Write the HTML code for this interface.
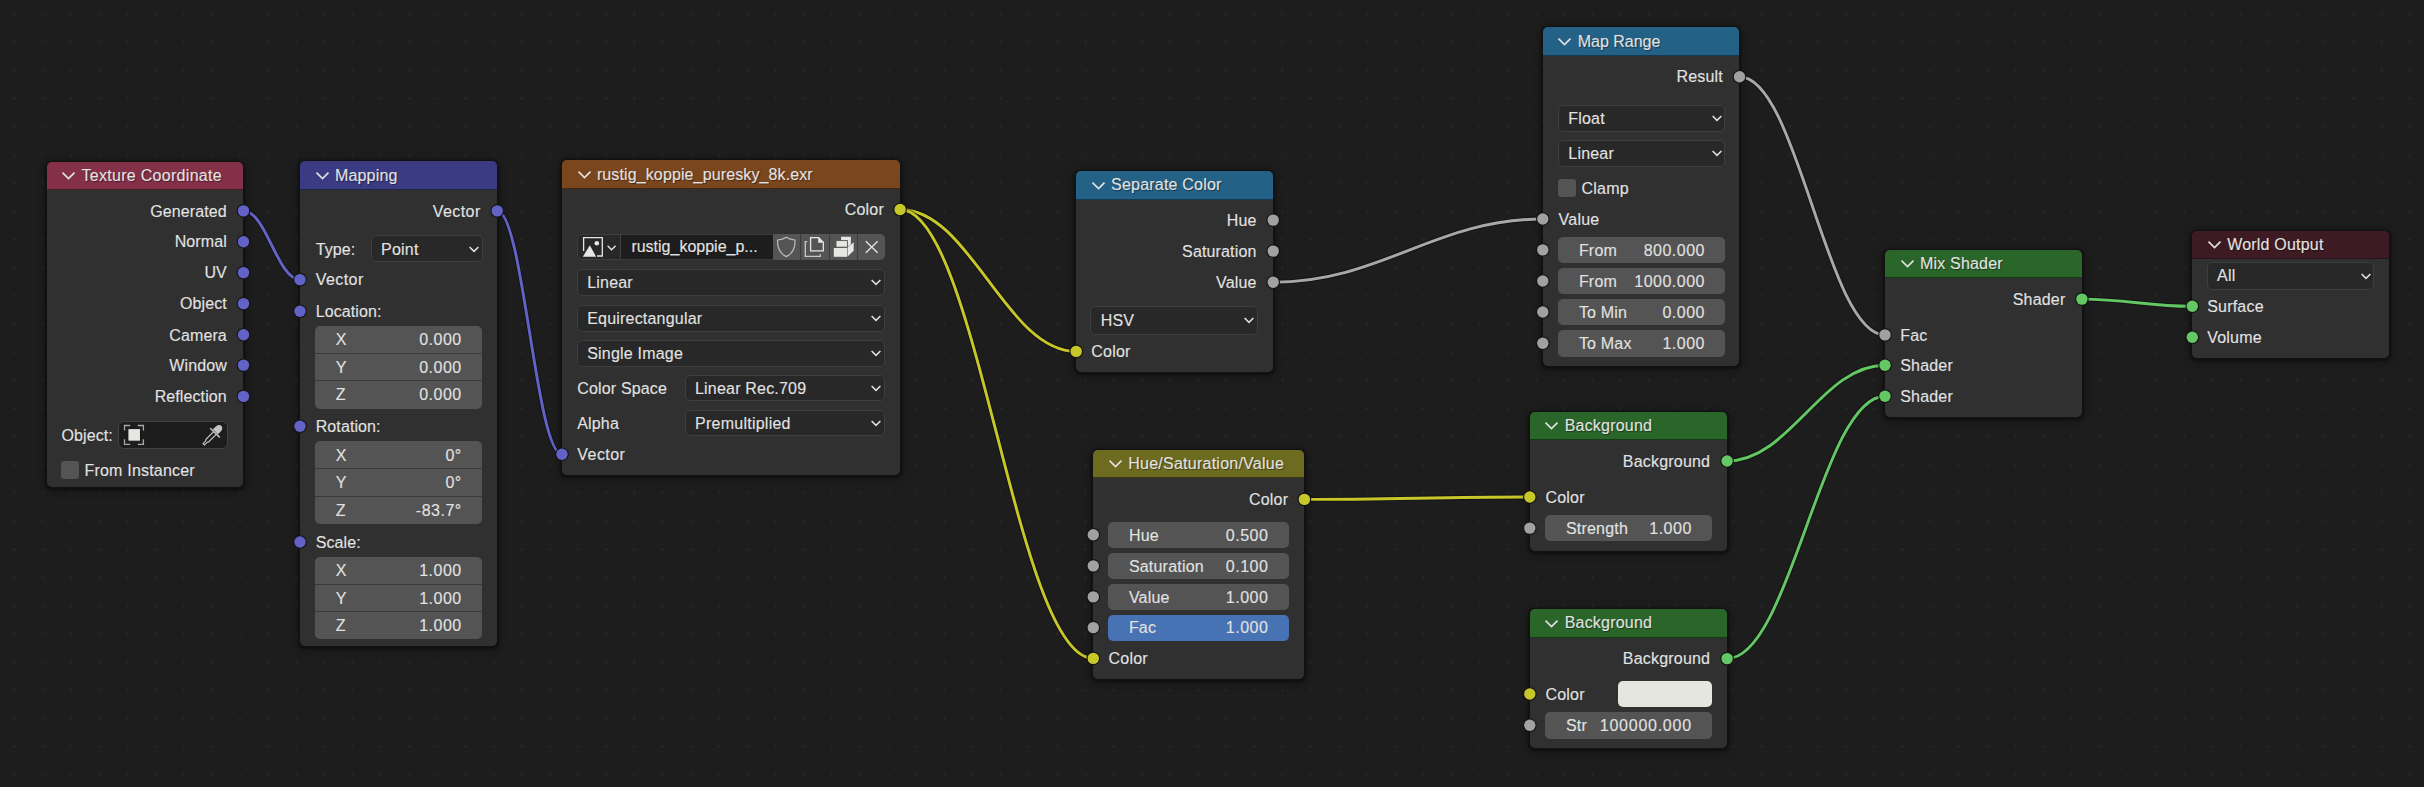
<!DOCTYPE html>
<html><head><meta charset="utf-8"><style>
html,body{margin:0;padding:0;}
body{width:2424px;height:787px;overflow:hidden;position:relative;background:#1d1d1d;
font-family:"Liberation Sans",sans-serif;}
.node{position:absolute;background:#303030;border-radius:5px;box-shadow:0 0 0 1px #121212,0 1px 2px 2px rgba(0,0,0,.32),0 2px 8px 3px rgba(0,0,0,.28);}
.hdr{position:absolute;border-radius:5px 5px 0 0;box-sizing:border-box;}
.t{position:absolute;font-size:16px;line-height:20px;white-space:nowrap;-webkit-text-stroke:0.12px currentColor;}
.ic{position:absolute;overflow:visible;}
.dd{position:absolute;background:#282828;border:1px solid #3e3e3e;border-radius:5px;box-sizing:border-box;}
.idfield{position:absolute;background:#1d1d1d;border:1px solid #434343;border-radius:6px;box-sizing:border-box;}
.nf{position:absolute;}
.sep{position:absolute;height:1px;background:#3a3a3a;}
.cb{position:absolute;width:18.6px;height:18.8px;background:#545454;border-radius:3px;}
svg.layer{position:absolute;left:0;top:0;}
</style></head><body>
<svg class="layer" width="2424" height="787"><defs><pattern id="g" patternUnits="userSpaceOnUse" x="0.51" y="-0.09" width="28.178" height="28.178"><rect x="13.1" y="13.1" width="2" height="2" rx="0.6" fill="#2a2a2a"/></pattern></defs><rect width="2424" height="787" fill="url(#g)"/></svg>
<svg class="layer" width="2424" height="787"><path d="M243.5,210.9 C266.1,210.9 277.4,279.6 300.0,279.6" stroke="rgba(10,10,10,.5)" stroke-width="4.8" fill="none"/><path d="M243.5,210.9 C266.1,210.9 277.4,279.6 300.0,279.6" stroke="#6363c7" stroke-width="2.9" fill="none"/><path d="M497.2,210.9 C523.1,210.9 536.1,454.3 562.0,454.3" stroke="rgba(10,10,10,.5)" stroke-width="4.8" fill="none"/><path d="M497.2,210.9 C523.1,210.9 536.1,454.3 562.0,454.3" stroke="#6363c7" stroke-width="2.9" fill="none"/><path d="M900.1,209.5 C970.5,209.5 1005.8,351.4 1076.2,351.4" stroke="rgba(10,10,10,.5)" stroke-width="4.8" fill="none"/><path d="M900.1,209.5 C970.5,209.5 1005.8,351.4 1076.2,351.4" stroke="#c7c729" stroke-width="2.9" fill="none"/><path d="M900.1,209.5 C977.4,209.5 1016.0,658.4 1093.3,658.4" stroke="rgba(10,10,10,.5)" stroke-width="4.8" fill="none"/><path d="M900.1,209.5 C977.4,209.5 1016.0,658.4 1093.3,658.4" stroke="#c7c729" stroke-width="2.9" fill="none"/><path d="M1273.2,282.2 C1381.0,282.2 1435.0,219.0 1542.8,219.0" stroke="rgba(10,10,10,.5)" stroke-width="4.8" fill="none"/><path d="M1273.2,282.2 C1381.0,282.2 1435.0,219.0 1542.8,219.0" stroke="#a8a8a8" stroke-width="2.9" fill="none"/><path d="M1739.5,76.7 C1797.7,76.7 1826.8,334.9 1885.0,334.9" stroke="rgba(10,10,10,.5)" stroke-width="4.8" fill="none"/><path d="M1739.5,76.7 C1797.7,76.7 1826.8,334.9 1885.0,334.9" stroke="#a8a8a8" stroke-width="2.9" fill="none"/><path d="M1304.4,499.4 C1394.6,499.4 1439.6,497.0 1529.8,497.0" stroke="rgba(10,10,10,.5)" stroke-width="4.8" fill="none"/><path d="M1304.4,499.4 C1394.6,499.4 1439.6,497.0 1529.8,497.0" stroke="#c7c729" stroke-width="2.9" fill="none"/><path d="M1727.1,461.0 C1790.3,461.0 1821.8,365.2 1885.0,365.2" stroke="rgba(10,10,10,.5)" stroke-width="4.8" fill="none"/><path d="M1727.1,461.0 C1790.3,461.0 1821.8,365.2 1885.0,365.2" stroke="#63c763" stroke-width="2.9" fill="none"/><path d="M1727.1,658.6 C1790.3,658.6 1821.8,396.2 1885.0,396.2" stroke="rgba(10,10,10,.5)" stroke-width="4.8" fill="none"/><path d="M1727.1,658.6 C1790.3,658.6 1821.8,396.2 1885.0,396.2" stroke="#63c763" stroke-width="2.9" fill="none"/><path d="M2081.9,299.1 C2126.1,299.1 2148.1,306.3 2192.3,306.3" stroke="rgba(10,10,10,.5)" stroke-width="4.8" fill="none"/><path d="M2081.9,299.1 C2126.1,299.1 2148.1,306.3 2192.3,306.3" stroke="#63c763" stroke-width="2.9" fill="none"/></svg>
<div class="node" style="left:46.5px;top:161.5px;width:196.7px;height:325.0px"></div>
<div class="hdr" style="left:46.5px;top:161.5px;width:196.7px;height:28.5px;background:#833048;border-bottom:1.5px solid #42202a"></div>
<svg class="ic" style="left:61.1px;top:170.1px" width="16" height="12"><polyline points="1.5,2.6 7.5,8.6 13.5,2.6" fill="none" stroke="#e2e2e2" stroke-width="1.6"/></svg>
<div class="t" style="left:81.4px;top:165.8px;color:#e2e2e2;letter-spacing:0.3px;text-shadow:1px 1px 1px rgba(0,0,0,.45)">Texture Coordinate</div>
<div class="t" style="right:2197.2px;top:201.6px;color:#e2e2e2;letter-spacing:0.1px;">Generated</div>
<div class="t" style="right:2197.2px;top:232.4px;color:#e2e2e2;letter-spacing:0.1px;">Normal</div>
<div class="t" style="right:2197.2px;top:263.3px;color:#e2e2e2;letter-spacing:0.1px;">UV</div>
<div class="t" style="right:2197.2px;top:294.3px;color:#e2e2e2;letter-spacing:0.1px;">Object</div>
<div class="t" style="right:2197.2px;top:325.5px;color:#e2e2e2;letter-spacing:0.1px;">Camera</div>
<div class="t" style="right:2197.2px;top:355.8px;color:#e2e2e2;letter-spacing:0.1px;">Window</div>
<div class="t" style="right:2197.2px;top:387.1px;color:#e2e2e2;letter-spacing:0.1px;">Reflection</div>
<div class="t" style="left:61.5px;top:425.9px;color:#e2e2e2;letter-spacing:0.1px;">Object:</div>
<div class="idfield" style="left:117.7px;top:421.2px;width:110.7px;height:27.5px"></div>
<svg class="ic" style="left:122px;top:423px" width="26" height="24">
<path d="M2.5,7.6 V2.5 H8.2 M15.8,2.5 H21.4 V7.6 M21.4,16.2 V21.3 H15.8 M8.2,21.3 H2.5 V16.2" fill="none" stroke="#a8a8a8" stroke-width="1.3"/>
<rect x="5.9" y="5.6" width="12.6" height="12.6" rx="1" fill="#e6e6e2" stroke="#0f0f0f" stroke-width="1"/>
</svg>
<svg class="ic" style="left:201px;top:423px" width="24" height="24">
<path d="M19.6,2.3 c1.9,1.2 2.3,3.7 0.8,5.4 l-3.4,3.6 l-5.2,-5 l3.6,-3.3 c1.2,-1.1 3,-1.5 4.2,-0.7z" fill="#c4c4c4"/>
<path d="M9.2,5.2 l9.6,9.2" stroke="#c4c4c4" stroke-width="1.5"/>
<path d="M12.6,8.6 l-7.6,7.8 l-0.3,1.4 l-2.6,2.8 l1.4,1.3 l2.7,-2.7 l1.4,-0.3 l7.6,-7.6" fill="none" stroke="#c4c4c4" stroke-width="1.2"/>
</svg>
<div class="cb" style="left:60.7px;top:460.6px"></div>
<div class="t" style="left:84.5px;top:460.7px;color:#e2e2e2;letter-spacing:0.2px;">From Instancer</div>
<div class="node" style="left:300.0px;top:161.2px;width:197.2px;height:485.3px"></div>
<div class="hdr" style="left:300.0px;top:161.2px;width:197.2px;height:28.8px;background:#3b3b84;border-bottom:1.5px solid #23234a"></div>
<svg class="ic" style="left:314.6px;top:169.9px" width="16" height="12"><polyline points="1.5,2.6 7.5,8.6 13.5,2.6" fill="none" stroke="#e2e2e2" stroke-width="1.6"/></svg>
<div class="t" style="left:334.9px;top:165.6px;color:#e2e2e2;letter-spacing:0.2px;text-shadow:1px 1px 1px rgba(0,0,0,.45)">Mapping</div>
<div class="t" style="right:1943.3px;top:201.6px;color:#e2e2e2;letter-spacing:0.45px;">Vector</div>
<div class="t" style="left:315.7px;top:239.8px;color:#e2e2e2;letter-spacing:0.1px;">Type:</div>
<div class="dd" style="left:370.6px;top:235.4px;width:112.0px;height:27.1px"></div>
<div class="t" style="left:381.1px;top:239.6px;color:#e2e2e2;letter-spacing:0.2px;">Point</div>
<svg class="ic" style="left:467.6px;top:243.9px" width="12" height="10"><polyline points="1.6,3 6,7.4 10.4,3" fill="none" stroke="#e2e2e2" stroke-width="1.5"/></svg>
<div class="t" style="left:315.7px;top:270.3px;color:#e2e2e2;letter-spacing:0.45px;">Vector</div>
<div class="t" style="left:315.7px;top:301.9px;color:#e2e2e2;letter-spacing:0.1px;">Location:</div>
<div class="nf" style="left:314.8px;top:325.5px;width:167.4px;height:83.1px;background:#545454;border-radius:5px"></div>
<div class="t" style="left:335.8px;top:330.1px;color:#e2e2e2;letter-spacing:0px;">X</div>
<div class="t" style="right:1962.3px;top:330.1px;color:#e2e2e2;letter-spacing:0.5px;">0.000</div>
<div class="sep" style="left:314.8px;top:352.7px;width:167.4px"></div>
<div class="t" style="left:335.8px;top:357.8px;color:#e2e2e2;letter-spacing:0px;">Y</div>
<div class="t" style="right:1962.3px;top:357.8px;color:#e2e2e2;letter-spacing:0.5px;">0.000</div>
<div class="sep" style="left:314.8px;top:380.4px;width:167.4px"></div>
<div class="t" style="left:335.8px;top:385.4px;color:#e2e2e2;letter-spacing:0px;">Z</div>
<div class="t" style="right:1962.3px;top:385.4px;color:#e2e2e2;letter-spacing:0.5px;">0.000</div>
<div class="t" style="left:315.7px;top:416.9px;color:#e2e2e2;letter-spacing:0.1px;">Rotation:</div>
<div class="nf" style="left:314.8px;top:441.2px;width:167.4px;height:82.8px;background:#545454;border-radius:5px"></div>
<div class="t" style="left:335.8px;top:445.7px;color:#e2e2e2;letter-spacing:0px;">X</div>
<div class="t" style="right:1962.3px;top:445.7px;color:#e2e2e2;letter-spacing:0.5px;">0°</div>
<div class="sep" style="left:314.8px;top:468.3px;width:167.4px"></div>
<div class="t" style="left:335.8px;top:473.3px;color:#e2e2e2;letter-spacing:0px;">Y</div>
<div class="t" style="right:1962.3px;top:473.3px;color:#e2e2e2;letter-spacing:0.5px;">0°</div>
<div class="sep" style="left:314.8px;top:495.9px;width:167.4px"></div>
<div class="t" style="left:335.8px;top:500.9px;color:#e2e2e2;letter-spacing:0px;">Z</div>
<div class="t" style="right:1962.3px;top:500.9px;color:#e2e2e2;letter-spacing:0.5px;">-83.7°</div>
<div class="t" style="left:315.7px;top:532.7px;color:#e2e2e2;letter-spacing:0.1px;">Scale:</div>
<div class="nf" style="left:314.8px;top:556.6px;width:167.4px;height:82.6px;background:#545454;border-radius:5px"></div>
<div class="t" style="left:335.8px;top:561.1px;color:#e2e2e2;letter-spacing:0px;">X</div>
<div class="t" style="right:1962.3px;top:561.1px;color:#e2e2e2;letter-spacing:0.5px;">1.000</div>
<div class="sep" style="left:314.8px;top:583.6px;width:167.4px"></div>
<div class="t" style="left:335.8px;top:588.6px;color:#e2e2e2;letter-spacing:0px;">Y</div>
<div class="t" style="right:1962.3px;top:588.6px;color:#e2e2e2;letter-spacing:0.5px;">1.000</div>
<div class="sep" style="left:314.8px;top:611.2px;width:167.4px"></div>
<div class="t" style="left:335.8px;top:616.1px;color:#e2e2e2;letter-spacing:0px;">Z</div>
<div class="t" style="right:1962.3px;top:616.1px;color:#e2e2e2;letter-spacing:0.5px;">1.000</div>
<div class="node" style="left:562.0px;top:160.0px;width:338.1px;height:315.0px"></div>
<div class="hdr" style="left:562.0px;top:160.0px;width:338.1px;height:29.0px;background:#7a461e;border-bottom:1.5px solid #40260f"></div>
<svg class="ic" style="left:576.6px;top:168.8px" width="16" height="12"><polyline points="1.5,2.6 7.5,8.6 13.5,2.6" fill="none" stroke="#e2e2e2" stroke-width="1.6"/></svg>
<div class="t" style="left:596.9px;top:164.5px;color:#e2e2e2;letter-spacing:0.12px;text-shadow:1px 1px 1px rgba(0,0,0,.45)">rustig_koppie_puresky_8k.exr</div>
<div class="t" style="right:1540.1px;top:200.2px;color:#e2e2e2;letter-spacing:0.2px;">Color</div>
<div class="dd" style="left:576.7px;top:233.9px;width:52px;height:26.3px;border-top-right-radius:0;border-bottom-right-radius:0"></div>
<div style="position:absolute;left:620.5px;top:233.9px;width:152.2px;height:26.3px;background:#1d1d1d;border-top:1px solid #3a3a3a;border-bottom:1px solid #3a3a3a;box-sizing:border-box"></div>
<div style="position:absolute;left:620px;top:234.4px;width:1px;height:25.3px;background:#3f3f3f"></div>
<div style="position:absolute;left:772.7px;top:233.9px;width:27.4px;height:26.3px;background:#545454;"></div>
<div style="position:absolute;left:801.1px;top:233.9px;width:27.9px;height:26.3px;background:#545454;"></div>
<div style="position:absolute;left:830.0px;top:233.9px;width:27.0px;height:26.3px;background:#545454;"></div>
<div style="position:absolute;left:858.1px;top:233.9px;width:26.7px;height:26.3px;background:#545454;border-top-right-radius:5px;border-bottom-right-radius:5px;"></div>
<div style="position:absolute;left:800.1px;top:233.9px;width:1px;height:26.3px;background:#3a3a3a"></div>
<div style="position:absolute;left:829px;top:233.9px;width:1px;height:26.3px;background:#3a3a3a"></div>
<div style="position:absolute;left:857px;top:233.9px;width:1px;height:26.3px;background:#3a3a3a"></div>
<svg class="ic" style="left:581px;top:235px" width="40" height="24">
<path d="M2.6,16 V2.6 H21.3 V21 H16.1" fill="none" stroke="#e6e6e2" stroke-width="1.3"/>
<path d="M1.9,21.7 L8.8,10.2 L15.1,21.7 Z" fill="#e6e6e2"/>
<circle cx="15.8" cy="8.2" r="2.3" fill="#e6e6e2"/>
<polyline points="26.6,10.8 30.6,14.8 34.6,10.8" fill="none" stroke="#e6e6e2" stroke-width="1.3"/>
</svg>
<div class="t" style="left:631.4px;top:237.1px;color:#e2e2e2;letter-spacing:0.0px;">rustig_koppie_p...</div>
<svg class="ic" style="left:776px;top:236px" width="21" height="22">
<path d="M10.3,1.3 C8,2.9 5.4,3.8 1.6,4 C1.2,12.5 3.6,17.4 10.3,20.6 C17,17.4 19.4,12.5 19,4 C15.2,3.8 12.6,2.9 10.3,1.3 Z" fill="none" stroke="#bdbdbd" stroke-width="1.2"/>
</svg>
<svg class="ic" style="left:803px;top:236px" width="24" height="22">
<path d="M4.3,5.7 H2.3 V20.4 H17.3 V18.3" fill="none" stroke="#c8c8c8" stroke-width="1.3"/>
<path d="M7.6,1.6 H15.6 L20.3,6.3 V14.9 H7.6 Z" fill="none" stroke="#e6e6e2" stroke-width="1.3"/>
<path d="M15.2,1.5 L20.4,6.7 H15.2 Z" fill="#e6e6e2"/>
</svg>
<svg class="ic" style="left:832px;top:236px" width="24" height="22">
<path d="M9.1,0.7 H18.9 V8.2 L16.6,10.5 H9.1 Z" fill="#e6e6e2"/>
<rect x="4" y="4.6" width="11.4" height="6.6" fill="#e6e6e2" stroke="#545454" stroke-width="0.9"/>
<rect x="1.8" y="12" width="13.3" height="8.8" fill="#e6e6e2"/>
<path d="M15.6,11.6 L21.7,6.2 V14.8 L15.6,20.4 Z" fill="#e6e6e2"/>
</svg>
<svg class="ic" style="left:863px;top:239px" width="17" height="16">
<path d="M2.8,2.3 L14.7,13.8 M14.7,2.3 L2.8,13.8" stroke="#e6e6e2" stroke-width="1.3"/>
</svg>
<div class="dd" style="left:576.7px;top:268.5px;width:308.6px;height:27.9px"></div>
<div class="t" style="left:587.2px;top:273.1px;color:#e2e2e2;letter-spacing:0.2px;">Linear</div>
<svg class="ic" style="left:870.3px;top:277.4px" width="12" height="10"><polyline points="1.6,3 6,7.4 10.4,3" fill="none" stroke="#e2e2e2" stroke-width="1.5"/></svg>
<div class="dd" style="left:576.7px;top:304.7px;width:308.6px;height:27.0px"></div>
<div class="t" style="left:587.2px;top:308.9px;color:#e2e2e2;letter-spacing:0.2px;">Equirectangular</div>
<svg class="ic" style="left:870.3px;top:313.2px" width="12" height="10"><polyline points="1.6,3 6,7.4 10.4,3" fill="none" stroke="#e2e2e2" stroke-width="1.5"/></svg>
<div class="dd" style="left:576.7px;top:339.7px;width:308.6px;height:27.0px"></div>
<div class="t" style="left:587.2px;top:343.9px;color:#e2e2e2;letter-spacing:0.2px;">Single Image</div>
<svg class="ic" style="left:870.3px;top:348.2px" width="12" height="10"><polyline points="1.6,3 6,7.4 10.4,3" fill="none" stroke="#e2e2e2" stroke-width="1.5"/></svg>
<div class="t" style="left:577.3px;top:378.7px;color:#e2e2e2;letter-spacing:0.15px;">Color Space</div>
<div class="dd" style="left:684.5px;top:374.7px;width:200.8px;height:26.5px"></div>
<div class="t" style="left:695.0px;top:378.6px;color:#e2e2e2;letter-spacing:0.2px;">Linear Rec.709</div>
<svg class="ic" style="left:870.3px;top:382.9px" width="12" height="10"><polyline points="1.6,3 6,7.4 10.4,3" fill="none" stroke="#e2e2e2" stroke-width="1.5"/></svg>
<div class="t" style="left:577.3px;top:413.8px;color:#e2e2e2;letter-spacing:0.15px;">Alpha</div>
<div class="dd" style="left:684.5px;top:409.7px;width:200.8px;height:26.8px"></div>
<div class="t" style="left:695.0px;top:413.8px;color:#e2e2e2;letter-spacing:0.25px;">Premultiplied</div>
<svg class="ic" style="left:870.3px;top:418.1px" width="12" height="10"><polyline points="1.6,3 6,7.4 10.4,3" fill="none" stroke="#e2e2e2" stroke-width="1.5"/></svg>
<div class="t" style="left:577.3px;top:445.0px;color:#e2e2e2;letter-spacing:0.45px;">Vector</div>
<div class="node" style="left:1076.2px;top:171.2px;width:197.0px;height:200.4px"></div>
<div class="hdr" style="left:1076.2px;top:171.2px;width:197.0px;height:28.5px;background:#246186;border-bottom:1.5px solid #153a50"></div>
<svg class="ic" style="left:1090.8px;top:179.8px" width="16" height="12"><polyline points="1.5,2.6 7.5,8.6 13.5,2.6" fill="none" stroke="#e2e2e2" stroke-width="1.6"/></svg>
<div class="t" style="left:1111.1px;top:175.4px;color:#e2e2e2;letter-spacing:0.2px;text-shadow:1px 1px 1px rgba(0,0,0,.45)">Separate Color</div>
<div class="t" style="right:1167.5px;top:210.8px;color:#e2e2e2;letter-spacing:0.15px;">Hue</div>
<div class="t" style="right:1167.5px;top:241.8px;color:#e2e2e2;letter-spacing:0.15px;">Saturation</div>
<div class="t" style="right:1167.5px;top:272.9px;color:#e2e2e2;letter-spacing:0.15px;">Value</div>
<div class="dd" style="left:1090.2px;top:306.2px;width:168.2px;height:28.5px"></div>
<div class="t" style="left:1100.7px;top:311.1px;color:#e2e2e2;letter-spacing:0.2px;">HSV</div>
<svg class="ic" style="left:1243.4px;top:315.4px" width="12" height="10"><polyline points="1.6,3 6,7.4 10.4,3" fill="none" stroke="#e2e2e2" stroke-width="1.5"/></svg>
<div class="t" style="left:1091.3px;top:342.1px;color:#e2e2e2;letter-spacing:0.2px;">Color</div>
<div class="node" style="left:1093.3px;top:450.2px;width:211.1px;height:228.5px"></div>
<div class="hdr" style="left:1093.3px;top:450.2px;width:211.1px;height:27.8px;background:#6d6b20;border-bottom:1.5px solid #3c3a12"></div>
<svg class="ic" style="left:1107.9px;top:458.4px" width="16" height="12"><polyline points="1.5,2.6 7.5,8.6 13.5,2.6" fill="none" stroke="#e2e2e2" stroke-width="1.6"/></svg>
<div class="t" style="left:1128.2px;top:454.1px;color:#e2e2e2;letter-spacing:0.25px;text-shadow:1px 1px 1px rgba(0,0,0,.45)">Hue/Saturation/Value</div>
<div class="t" style="right:1135.8px;top:490.1px;color:#e2e2e2;letter-spacing:0.2px;">Color</div>
<div class="nf" style="left:1107.9px;top:521.6px;width:181.0px;height:26.4px;background:#545454;border-radius:5px"></div>
<div class="t" style="left:1128.9px;top:525.5px;color:#e2e2e2;letter-spacing:0.2px;">Hue</div>
<div class="t" style="right:1155.6px;top:525.5px;color:#e2e2e2;letter-spacing:0.5px;">0.500</div>
<div class="nf" style="left:1107.9px;top:552.7px;width:181.0px;height:26.3px;background:#545454;border-radius:5px"></div>
<div class="t" style="left:1128.9px;top:556.6px;color:#e2e2e2;letter-spacing:0.2px;">Saturation</div>
<div class="t" style="right:1155.6px;top:556.6px;color:#e2e2e2;letter-spacing:0.5px;">0.100</div>
<div class="nf" style="left:1107.9px;top:583.7px;width:181.0px;height:26.3px;background:#545454;border-radius:5px"></div>
<div class="t" style="left:1128.9px;top:587.6px;color:#e2e2e2;letter-spacing:0.2px;">Value</div>
<div class="t" style="right:1155.6px;top:587.6px;color:#e2e2e2;letter-spacing:0.5px;">1.000</div>
<div class="nf" style="left:1107.9px;top:614.6px;width:181.0px;height:26.2px;background:#4772b3;border-radius:5px"></div>
<div class="t" style="left:1128.9px;top:618.4px;color:#e2e2e2;letter-spacing:0.2px;">Fac</div>
<div class="t" style="right:1155.6px;top:618.4px;color:#e2e2e2;letter-spacing:0.5px;">1.000</div>
<div class="t" style="left:1108.6px;top:649.1px;color:#e2e2e2;letter-spacing:0.2px;">Color</div>
<div class="node" style="left:1542.8px;top:27.2px;width:196.7px;height:339.0px"></div>
<div class="hdr" style="left:1542.8px;top:27.2px;width:196.7px;height:29.0px;background:#246186;border-bottom:1.5px solid #153a50"></div>
<svg class="ic" style="left:1557.4px;top:36.0px" width="16" height="12"><polyline points="1.5,2.6 7.5,8.6 13.5,2.6" fill="none" stroke="#e2e2e2" stroke-width="1.6"/></svg>
<div class="t" style="left:1577.7px;top:31.7px;color:#e2e2e2;letter-spacing:0.0px;text-shadow:1px 1px 1px rgba(0,0,0,.45)">Map Range</div>
<div class="t" style="right:701.0px;top:67.4px;color:#e2e2e2;letter-spacing:0.2px;">Result</div>
<div class="dd" style="left:1557.8px;top:104.5px;width:167.7px;height:27.0px"></div>
<div class="t" style="left:1568.3px;top:108.7px;color:#e2e2e2;letter-spacing:0.2px;">Float</div>
<svg class="ic" style="left:1710.5px;top:113.0px" width="12" height="10"><polyline points="1.6,3 6,7.4 10.4,3" fill="none" stroke="#e2e2e2" stroke-width="1.5"/></svg>
<div class="dd" style="left:1557.8px;top:139.5px;width:167.7px;height:27.0px"></div>
<div class="t" style="left:1568.3px;top:143.7px;color:#e2e2e2;letter-spacing:0.2px;">Linear</div>
<svg class="ic" style="left:1710.5px;top:148.0px" width="12" height="10"><polyline points="1.6,3 6,7.4 10.4,3" fill="none" stroke="#e2e2e2" stroke-width="1.5"/></svg>
<div class="cb" style="left:1557.8px;top:178.6px"></div>
<div class="t" style="left:1581.6px;top:178.7px;color:#e2e2e2;letter-spacing:0.2px;">Clamp</div>
<div class="t" style="left:1558.6px;top:209.7px;color:#e2e2e2;letter-spacing:0.2px;">Value</div>
<div class="nf" style="left:1557.9px;top:236.6px;width:167.6px;height:26.7px;background:#545454;border-radius:5px"></div>
<div class="t" style="left:1578.9px;top:240.6px;color:#e2e2e2;letter-spacing:0.2px;">From</div>
<div class="t" style="right:719.0px;top:240.6px;color:#e2e2e2;letter-spacing:0.5px;">800.000</div>
<div class="nf" style="left:1557.9px;top:267.9px;width:167.6px;height:26.3px;background:#545454;border-radius:5px"></div>
<div class="t" style="left:1578.9px;top:271.7px;color:#e2e2e2;letter-spacing:0.2px;">From</div>
<div class="t" style="right:719.0px;top:271.7px;color:#e2e2e2;letter-spacing:0.5px;">1000.000</div>
<div class="nf" style="left:1557.9px;top:298.7px;width:167.6px;height:26.6px;background:#545454;border-radius:5px"></div>
<div class="t" style="left:1578.9px;top:302.7px;color:#e2e2e2;letter-spacing:0.2px;">To Min</div>
<div class="t" style="right:719.0px;top:302.7px;color:#e2e2e2;letter-spacing:0.5px;">0.000</div>
<div class="nf" style="left:1557.9px;top:329.9px;width:167.6px;height:26.7px;background:#545454;border-radius:5px"></div>
<div class="t" style="left:1578.9px;top:333.9px;color:#e2e2e2;letter-spacing:0.2px;">To Max</div>
<div class="t" style="right:719.0px;top:333.9px;color:#e2e2e2;letter-spacing:0.5px;">1.000</div>
<div class="node" style="left:1529.8px;top:411.8px;width:197.3px;height:139.1px"></div>
<div class="hdr" style="left:1529.8px;top:411.8px;width:197.3px;height:28.5px;background:#2a652a;border-bottom:1.5px solid #173b17"></div>
<svg class="ic" style="left:1544.4px;top:420.4px" width="16" height="12"><polyline points="1.5,2.6 7.5,8.6 13.5,2.6" fill="none" stroke="#e2e2e2" stroke-width="1.6"/></svg>
<div class="t" style="left:1564.7px;top:416.1px;color:#e2e2e2;letter-spacing:0.2px;text-shadow:1px 1px 1px rgba(0,0,0,.45)">Background</div>
<div class="t" style="right:713.8px;top:451.7px;color:#e2e2e2;letter-spacing:0.2px;">Background</div>
<div class="t" style="left:1545.5px;top:487.7px;color:#e2e2e2;letter-spacing:0.2px;">Color</div>
<div class="nf" style="left:1544.9px;top:514.9px;width:167.4px;height:26.4px;background:#545454;border-radius:5px"></div>
<div class="t" style="left:1565.9px;top:518.8px;color:#e2e2e2;letter-spacing:0.2px;">Strength</div>
<div class="t" style="right:732.2px;top:518.8px;color:#e2e2e2;letter-spacing:0.5px;">1.000</div>
<div class="node" style="left:1529.8px;top:609.2px;width:197.3px;height:139.3px"></div>
<div class="hdr" style="left:1529.8px;top:609.2px;width:197.3px;height:28.4px;background:#2a652a;border-bottom:1.5px solid #173b17"></div>
<svg class="ic" style="left:1544.4px;top:617.7px" width="16" height="12"><polyline points="1.5,2.6 7.5,8.6 13.5,2.6" fill="none" stroke="#e2e2e2" stroke-width="1.6"/></svg>
<div class="t" style="left:1564.7px;top:613.4px;color:#e2e2e2;letter-spacing:0.2px;text-shadow:1px 1px 1px rgba(0,0,0,.45)">Background</div>
<div class="t" style="right:713.8px;top:649.3px;color:#e2e2e2;letter-spacing:0.2px;">Background</div>
<div class="t" style="left:1545.5px;top:684.7px;color:#e2e2e2;letter-spacing:0.2px;">Color</div>
<div style="position:absolute;left:1618.1px;top:681.4px;width:93.8px;height:25.4px;background:#e6e6e1;border-radius:5px"></div>
<div class="nf" style="left:1544.9px;top:711.9px;width:167.4px;height:26.8px;background:#545454;border-radius:5px"></div>
<div class="t" style="left:1565.9px;top:716.0px;color:#e2e2e2;letter-spacing:0.2px;">Str</div>
<div class="t" style="right:732.2px;top:716.0px;color:#e2e2e2;letter-spacing:0.75px;">100000.000</div>
<div class="node" style="left:1885.0px;top:249.7px;width:196.9px;height:167.7px"></div>
<div class="hdr" style="left:1885.0px;top:249.7px;width:196.9px;height:28.4px;background:#2a652a;border-bottom:1.5px solid #173b17"></div>
<svg class="ic" style="left:1899.6px;top:258.2px" width="16" height="12"><polyline points="1.5,2.6 7.5,8.6 13.5,2.6" fill="none" stroke="#e2e2e2" stroke-width="1.6"/></svg>
<div class="t" style="left:1919.9px;top:253.9px;color:#e2e2e2;letter-spacing:0.2px;text-shadow:1px 1px 1px rgba(0,0,0,.45)">Mix Shader</div>
<div class="t" style="right:358.5px;top:289.8px;color:#e2e2e2;letter-spacing:0.2px;">Shader</div>
<div class="t" style="left:1900.2px;top:325.6px;color:#e2e2e2;letter-spacing:0.2px;">Fac</div>
<div class="t" style="left:1900.2px;top:355.9px;color:#e2e2e2;letter-spacing:0.2px;">Shader</div>
<div class="t" style="left:1900.2px;top:386.9px;color:#e2e2e2;letter-spacing:0.2px;">Shader</div>
<div class="node" style="left:2192.3px;top:230.5px;width:196.8px;height:127.1px"></div>
<div class="hdr" style="left:2192.3px;top:230.5px;width:196.8px;height:28.5px;background:#3e1b23;border-bottom:1.5px solid #2a1318"></div>
<svg class="ic" style="left:2206.9px;top:239.1px" width="16" height="12"><polyline points="1.5,2.6 7.5,8.6 13.5,2.6" fill="none" stroke="#e2e2e2" stroke-width="1.6"/></svg>
<div class="t" style="left:2227.2px;top:234.8px;color:#e2e2e2;letter-spacing:0.2px;text-shadow:1px 1px 1px rgba(0,0,0,.45)">World Output</div>
<div class="dd" style="left:2206.6px;top:261.5px;width:167.9px;height:28.0px"></div>
<div class="t" style="left:2217.1px;top:266.2px;color:#e2e2e2;letter-spacing:0.2px;">All</div>
<svg class="ic" style="left:2359.5px;top:270.5px" width="12" height="10"><polyline points="1.6,3 6,7.4 10.4,3" fill="none" stroke="#e2e2e2" stroke-width="1.5"/></svg>
<div class="t" style="left:2207.2px;top:297.0px;color:#e2e2e2;letter-spacing:0.2px;">Surface</div>
<div class="t" style="left:2207.2px;top:327.9px;color:#e2e2e2;letter-spacing:0.2px;">Volume</div>
<svg class="layer" width="2424" height="787"><circle cx="243.5" cy="210.9" r="6.8" fill="#141414"/><circle cx="243.5" cy="210.9" r="5.7" fill="#6363c7"/><circle cx="243.5" cy="241.7" r="6.8" fill="#141414"/><circle cx="243.5" cy="241.7" r="5.7" fill="#6363c7"/><circle cx="243.5" cy="272.6" r="6.8" fill="#141414"/><circle cx="243.5" cy="272.6" r="5.7" fill="#6363c7"/><circle cx="243.5" cy="303.6" r="6.8" fill="#141414"/><circle cx="243.5" cy="303.6" r="5.7" fill="#6363c7"/><circle cx="243.5" cy="334.8" r="6.8" fill="#141414"/><circle cx="243.5" cy="334.8" r="5.7" fill="#6363c7"/><circle cx="243.5" cy="365.1" r="6.8" fill="#141414"/><circle cx="243.5" cy="365.1" r="5.7" fill="#6363c7"/><circle cx="243.5" cy="396.4" r="6.8" fill="#141414"/><circle cx="243.5" cy="396.4" r="5.7" fill="#6363c7"/><circle cx="497.2" cy="210.9" r="6.8" fill="#141414"/><circle cx="497.2" cy="210.9" r="5.7" fill="#6363c7"/><circle cx="300.0" cy="279.6" r="6.8" fill="#141414"/><circle cx="300.0" cy="279.6" r="5.7" fill="#6363c7"/><circle cx="300.0" cy="311.2" r="6.8" fill="#141414"/><circle cx="300.0" cy="311.2" r="5.7" fill="#6363c7"/><circle cx="300.0" cy="426.2" r="6.8" fill="#141414"/><circle cx="300.0" cy="426.2" r="5.7" fill="#6363c7"/><circle cx="300.0" cy="542.0" r="6.8" fill="#141414"/><circle cx="300.0" cy="542.0" r="5.7" fill="#6363c7"/><circle cx="900.1" cy="209.5" r="6.8" fill="#141414"/><circle cx="900.1" cy="209.5" r="5.7" fill="#c7c729"/><circle cx="562.0" cy="454.3" r="6.8" fill="#141414"/><circle cx="562.0" cy="454.3" r="5.7" fill="#6363c7"/><circle cx="1273.2" cy="220.1" r="6.8" fill="#141414"/><circle cx="1273.2" cy="220.1" r="5.7" fill="#a1a1a1"/><circle cx="1273.2" cy="251.1" r="6.8" fill="#141414"/><circle cx="1273.2" cy="251.1" r="5.7" fill="#a1a1a1"/><circle cx="1273.2" cy="282.2" r="6.8" fill="#141414"/><circle cx="1273.2" cy="282.2" r="5.7" fill="#a1a1a1"/><circle cx="1076.2" cy="351.4" r="6.8" fill="#141414"/><circle cx="1076.2" cy="351.4" r="5.7" fill="#c7c729"/><circle cx="1304.4" cy="499.4" r="6.8" fill="#141414"/><circle cx="1304.4" cy="499.4" r="5.7" fill="#c7c729"/><circle cx="1093.3" cy="534.8" r="6.8" fill="#141414"/><circle cx="1093.3" cy="534.8" r="5.7" fill="#a1a1a1"/><circle cx="1093.3" cy="565.9" r="6.8" fill="#141414"/><circle cx="1093.3" cy="565.9" r="5.7" fill="#a1a1a1"/><circle cx="1093.3" cy="596.9" r="6.8" fill="#141414"/><circle cx="1093.3" cy="596.9" r="5.7" fill="#a1a1a1"/><circle cx="1093.3" cy="627.6" r="6.8" fill="#141414"/><circle cx="1093.3" cy="627.6" r="5.7" fill="#a1a1a1"/><circle cx="1093.3" cy="658.4" r="6.8" fill="#141414"/><circle cx="1093.3" cy="658.4" r="5.7" fill="#c7c729"/><circle cx="1739.5" cy="76.7" r="6.8" fill="#141414"/><circle cx="1739.5" cy="76.7" r="5.7" fill="#a1a1a1"/><circle cx="1542.8" cy="219.0" r="6.8" fill="#141414"/><circle cx="1542.8" cy="219.0" r="5.7" fill="#a1a1a1"/><circle cx="1542.8" cy="249.9" r="6.8" fill="#141414"/><circle cx="1542.8" cy="249.9" r="5.7" fill="#a1a1a1"/><circle cx="1542.8" cy="281.0" r="6.8" fill="#141414"/><circle cx="1542.8" cy="281.0" r="5.7" fill="#a1a1a1"/><circle cx="1542.8" cy="312.0" r="6.8" fill="#141414"/><circle cx="1542.8" cy="312.0" r="5.7" fill="#a1a1a1"/><circle cx="1542.8" cy="343.2" r="6.8" fill="#141414"/><circle cx="1542.8" cy="343.2" r="5.7" fill="#a1a1a1"/><circle cx="1727.1" cy="461.0" r="6.8" fill="#141414"/><circle cx="1727.1" cy="461.0" r="5.7" fill="#63c763"/><circle cx="1529.8" cy="497.0" r="6.8" fill="#141414"/><circle cx="1529.8" cy="497.0" r="5.7" fill="#c7c729"/><circle cx="1529.8" cy="528.1" r="6.8" fill="#141414"/><circle cx="1529.8" cy="528.1" r="5.7" fill="#a1a1a1"/><circle cx="1727.1" cy="658.6" r="6.8" fill="#141414"/><circle cx="1727.1" cy="658.6" r="5.7" fill="#63c763"/><circle cx="1529.8" cy="694.0" r="6.8" fill="#141414"/><circle cx="1529.8" cy="694.0" r="5.7" fill="#c7c729"/><circle cx="1529.8" cy="725.3" r="6.8" fill="#141414"/><circle cx="1529.8" cy="725.3" r="5.7" fill="#a1a1a1"/><circle cx="2081.9" cy="299.1" r="6.8" fill="#141414"/><circle cx="2081.9" cy="299.1" r="5.7" fill="#63c763"/><circle cx="1885.0" cy="334.9" r="6.8" fill="#141414"/><circle cx="1885.0" cy="334.9" r="5.7" fill="#a1a1a1"/><circle cx="1885.0" cy="365.2" r="6.8" fill="#141414"/><circle cx="1885.0" cy="365.2" r="5.7" fill="#63c763"/><circle cx="1885.0" cy="396.2" r="6.8" fill="#141414"/><circle cx="1885.0" cy="396.2" r="5.7" fill="#63c763"/><circle cx="2192.3" cy="306.3" r="6.8" fill="#141414"/><circle cx="2192.3" cy="306.3" r="5.7" fill="#63c763"/><circle cx="2192.3" cy="337.2" r="6.8" fill="#141414"/><circle cx="2192.3" cy="337.2" r="5.7" fill="#63c763"/></svg>
</body></html>
